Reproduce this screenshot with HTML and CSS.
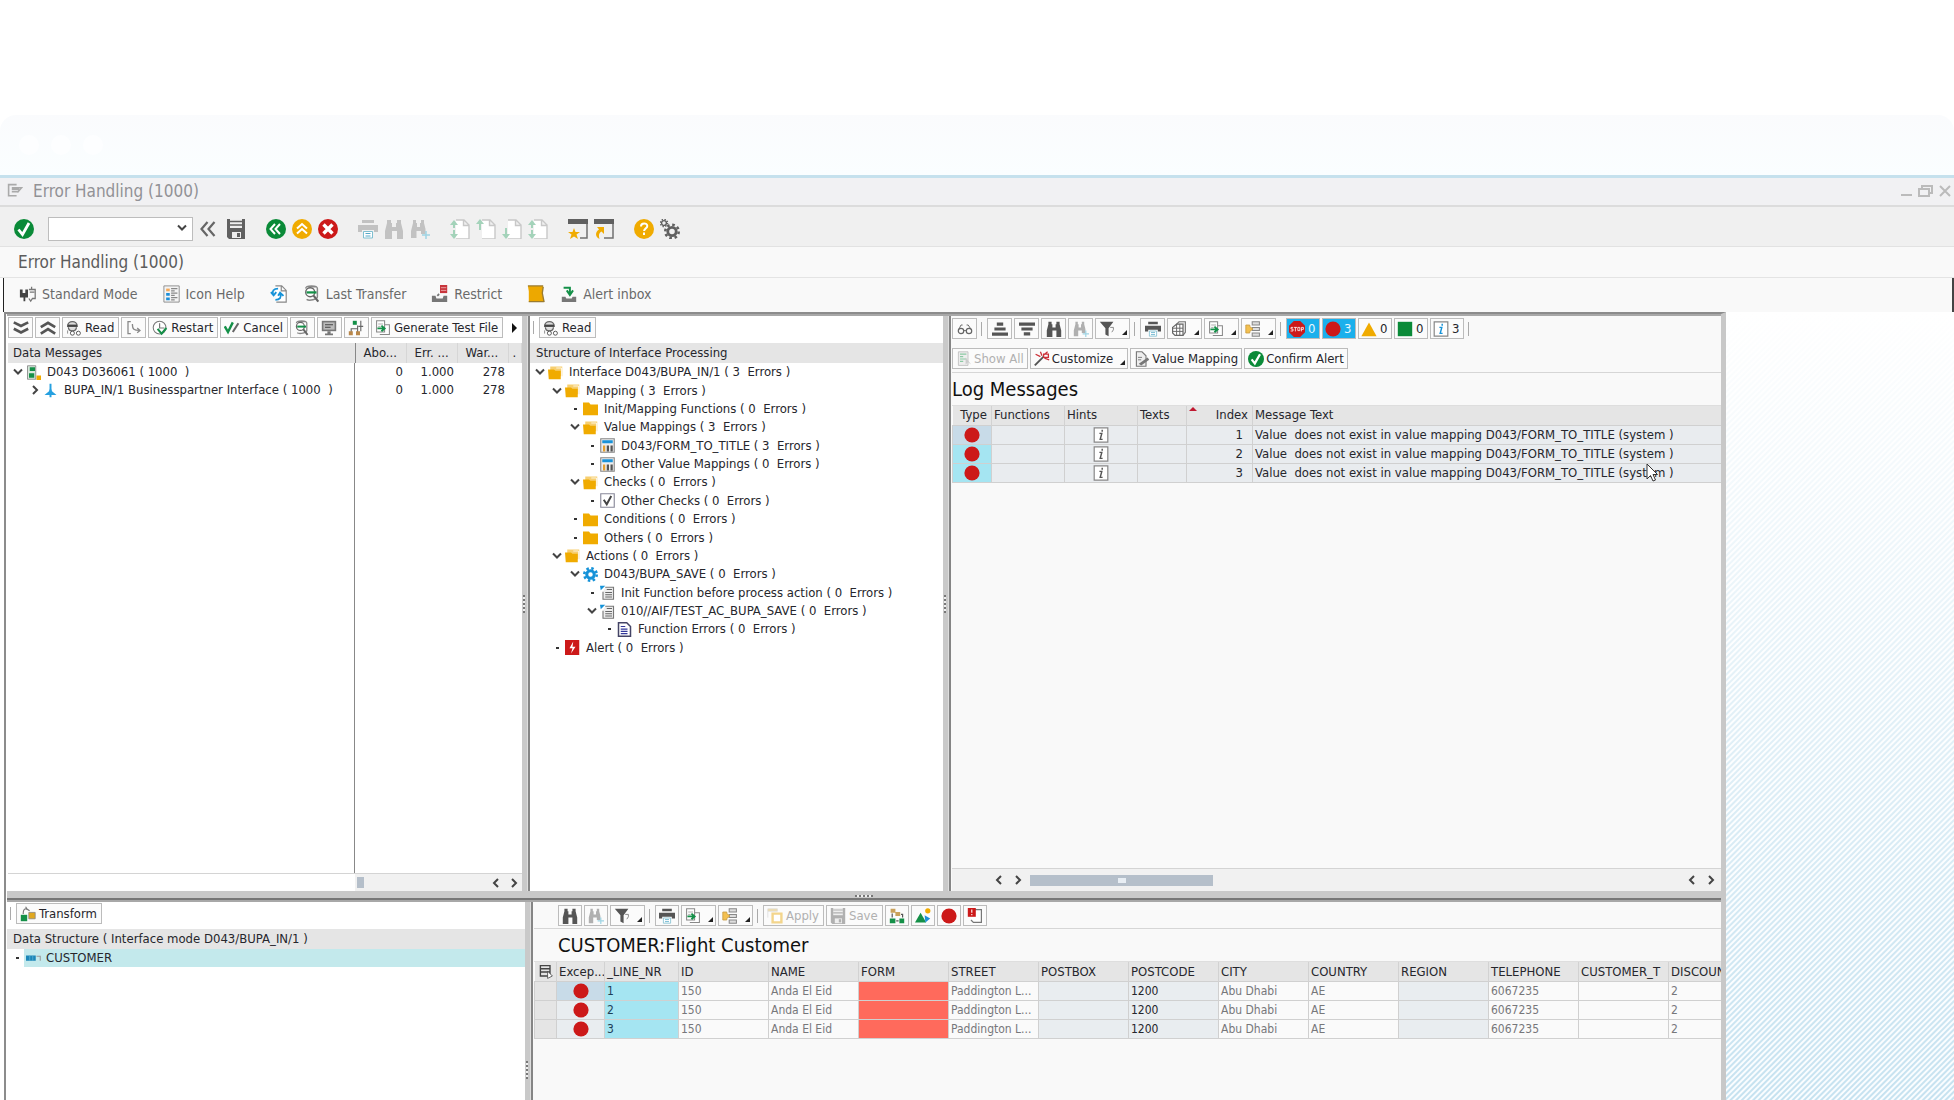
FILE: index.html
```html
<!DOCTYPE html>
<html lang="en">
<head>
<meta charset="utf-8">
<title>Error Handling (1000)</title>
<link rel="stylesheet" href="styles.css">
</head>
<body>
<svg class="sprite" aria-hidden="true">
  <defs>
    <symbol id="ok" viewBox="0 0 20 20"><circle cx="10" cy="10" r="10" fill="#0a8a38"/><path d="M4.500 10.500l4 5 6.500-11.500" fill="none" stroke="#fff" stroke-width="2.800"/></symbol>
    <symbol id="dbl" viewBox="0 0 16 20"><path d="M7.500 3l-6 7 6 7M14.500 3l-6 7 6 7" fill="none" stroke="#666" stroke-width="2.200"/></symbol>
    <symbol id="save" viewBox="0 0 20 20"><path d="M1 0h18v20H3l-2-2z" fill="currentColor"/><path d="M4 0h12v9H4z" fill="#eee"/><path d="M4 2.500h12M4 6h12" stroke="currentColor" stroke-width="1.500"/><path d="M6 13h9v6H6z" fill="#eee"/><path d="M11 14h3v4h-3z" fill="currentColor"/></symbol>
    <symbol id="back" viewBox="0 0 20 20"><circle cx="10" cy="10" r="10" fill="#0a8a38"/><path d="M9 5l-4.500 5L9 15M14 5l-4.500 5 4.500 5" fill="none" stroke="#fff" stroke-width="2"/></symbol>
    <symbol id="exit" viewBox="0 0 20 20"><circle cx="10" cy="10" r="10" fill="#f0ab00"/><path d="M5 9.500l5-4.500 5 4.500M5 14.500l5-4.500 5 4.500" fill="none" stroke="#fff" stroke-width="2"/></symbol>
    <symbol id="stopx" viewBox="0 0 20 20"><circle cx="10" cy="10" r="10" fill="#cc1919"/><path d="M5.500 5.500l9 9M14.500 5.500l-9 9" stroke="#fff" stroke-width="3.400"/></symbol>
    <symbol id="print" viewBox="0 0 20 20"><path d="M4 1h12v3H4zM0 6h20v7h-4v-2H4v2H0z" fill="currentColor"/><path d="M5.500 12.500h9v6.500h-9z" fill="#fff" stroke="#7fbfd0"/><path d="M7.500 14.500h5M7.500 17h5" stroke="#57a9c8"/></symbol>
    <symbol id="find" viewBox="0 0 20 20"><path d="M3 1h4v3h1v4h4V4h1V1h4v3l2 8v8h-6v-8H8v8H1v-8l2-8z" fill="currentColor"/></symbol>
    <symbol id="findn" viewBox="0 0 20 20"><path d="M3 1h3v3h1v4h3V4h1V1h3v3l1.500 6v5H11v-3H6.500v7H1v-7l2-8z" fill="currentColor"/><path d="M16 12v8M12 16h8" stroke="#9fd4e4" stroke-width="1.500"/></symbol>
    <symbol id="pg" viewBox="0 0 20 20"><path d="M6 1h8l5 5v14H6M13.500 1v5.500H19" fill="#fff" stroke="#c8c8c8" stroke-width="1.400"/></symbol>
    <symbol id="pgtt" viewBox="0 0 20 20"><use href="#pg"/><path d="M4 1l4 5H5v3H3V6H0zM4 20l4-5H5v-4H3v4H0z" fill="#a4d3ba"/></symbol>
    <symbol id="pgup" viewBox="0 0 20 20"><use href="#pg"/><path d="M4 0l4 5H5v6H3V5H0z" fill="#a4d3ba"/></symbol>
    <symbol id="pgdn" viewBox="0 0 20 20"><use href="#pg"/><path d="M4 20l4-5H5V9H3v6H0z" fill="#a4d3ba"/></symbol>
    <symbol id="sess" viewBox="0 0 20 20"><path d="M0 0h20v5H0z" fill="#606060"/><path d="M19 5v14h-7" fill="none" stroke="#707070" stroke-width="1.500"/><path d="M6 9l1.500 4H12l-3.500 2.500L10 20l-4-2.600L2 20l1.500-4.500L0 13h4.500z" fill="#f0ab00"/></symbol>
    <symbol id="scut" viewBox="0 0 20 20"><path d="M0 0h20v5H0z" fill="#606060"/><path d="M19 5v14h-9" fill="none" stroke="#707070" stroke-width="1.500"/><path d="M3 8h7v7l-2.500-2.500C5 14 4.500 16 5.500 20 1 18 1 13 5 10.500z" fill="#f0ab00"/></symbol>
    <symbol id="help" viewBox="0 0 20 20"><circle cx="10" cy="10" r="10" fill="#f0ab00"/><path d="M7 7.500c0-4 6.300-4 6.300-.5 0 2.500-3.200 2.200-3.200 5M10 13.500v2.500" fill="none" stroke="#fff" stroke-width="2"/></symbol>
    <symbol id="gears" viewBox="0 0 20 20"><circle cx="12" cy="12.500" r="4.200" fill="none" stroke="#606060" stroke-width="2.800"/><circle cx="12" cy="12.500" r="6.700" fill="none" stroke="#606060" stroke-width="2.600" stroke-dasharray="2.600 2.660"/><circle cx="4" cy="4" r="2.400" fill="none" stroke="#606060" stroke-width="1.400"/><circle cx="4" cy="4" r="3.600" fill="none" stroke="#606060" stroke-width="1.400" stroke-dasharray="1.400 1.427"/></symbol>
    <symbol id="mode" viewBox="0 0 20 20"><path d="M1 5h3v4h3V5h3v9H7v4H5v-4H1z" fill="#444"/><path d="M11 5h7v10h-3l-2 3-2-3M14 2v3M17 8h-5" fill="none" stroke="#777" stroke-width="1.400"/></symbol>
    <symbol id="ihelp" viewBox="0 0 20 20"><path d="M1 1h17v18H1z" fill="#f4f4f4" stroke="#888"/><path d="M3.500 4h4v3h-4z" fill="#f5a958"/><path d="M3.500 9h4v3h-4zM3.500 14h4v3h-4z" fill="#1d8fd8"/><path d="M9 4h7M9 6.500h4M9 9h7M9 11.500h4M9 14h7M9 16.500h4" stroke="#888" stroke-width="1.200"/></symbol>
    <symbol id="refr" viewBox="0 0 20 20"><path d="M6 1h7l5 5v13H7M12.500 1v5.500H18" fill="#fff" stroke="#888" stroke-width="1.300"/><path d="M9 4C4 4 2 7 3.500 10M1 8l3 3.500L7 8M6 16.500c5 0 7-3 5.500-6.500M9 12l2.200-3.500L15 12" fill="none" stroke="#1592d8" stroke-width="2"/></symbol>
    <symbol id="mag" viewBox="0 0 20 20"><path d="M3 4c0-4 13-4 13 0v9c0 3-9 5-12 3M5 2h10" fill="none" stroke="#888" stroke-width="1.600"/><circle cx="8" cy="8" r="5" fill="#fff" stroke="#666" stroke-width="1.500"/><path d="M11.500 11.500l5.500 7" stroke="#666" stroke-width="2.400"/><path d="M4 7h11v2.500H4z" fill="#149048"/></symbol>
    <symbol id="restr" viewBox="0 0 20 20"><path d="M1 12h4l1 3h7l1-3h4v7H1z" fill="#777"/><path d="M10 0h8v9h-8z" fill="#c8353c"/><path d="M11 3h6M11 6h6" stroke="#eaa" stroke-width="1"/><path d="M9 10l-2 2" stroke="#777" stroke-width="2"/></symbol>
    <symbol id="note" viewBox="0 0 20 20"><path d="M1 1h17l-1 8 2 10H2V7z" fill="#eda800"/><path d="M1 1h17M2 18.500h17M18 2l-1 7 2 10" stroke="#9a7b30" fill="none" stroke-width="1.500"/></symbol>
    <symbol id="inbox" viewBox="0 0 20 20"><path d="M2 13h4l1 2h6l1-2h4v6H2z" fill="#777"/><path d="M4 3h7v6M7.500 6l3.500 5 3.500-5" fill="none" stroke="#149048" stroke-width="2.200"/></symbol>
    <symbol id="cdn" viewBox="0 0 20 20"><path d="M1 3l9 4.500L19 3M1 11l9 4.500 9-4.500" fill="none" stroke="#555" stroke-width="3.400"/></symbol>
    <symbol id="cup" viewBox="0 0 20 20"><path d="M1 9l9-5.500L19 9M1 17l9-5.500 9 5.500" fill="none" stroke="#555" stroke-width="3.400"/></symbol>
    <symbol id="read" viewBox="0 0 20 20"><path d="M2 8c0-8 12-8 12 0zM3 9c0 6 10 6 10 0" fill="#ddd" stroke="#666" stroke-width="1.600"/><path d="M2 7h12" stroke="#444" stroke-width="2.500"/><circle cx="8" cy="16.500" r="2.500" fill="#fff" stroke="#555" stroke-width="1.200"/><circle cx="15.500" cy="16.500" r="2.500" fill="#fff" stroke="#555" stroke-width="1.200"/><path d="M2 13v4" stroke="#777"/></symbol>
    <symbol id="step" viewBox="0 0 20 20"><path d="M6 2H2.500v15H6M8 5c0 7 2 8 9 8M14 10l3.500 3-3.500 3" fill="none" stroke="#888" stroke-width="1.600"/></symbol>
    <symbol id="rest" viewBox="0 0 20 20"><circle cx="9.500" cy="9.500" r="8" fill="#fff" stroke="#777" stroke-width="1.300"/><path d="M9.500 4v6h6" fill="none" stroke="#777" stroke-width="1.500"/><path d="M7 11l5 6 6-7" fill="none" stroke="#149048" stroke-width="2.600"/></symbol>
    <symbol id="canc" viewBox="0 0 20 20"><path d="M1 8l4 7 6-12" fill="none" stroke="#149048" stroke-width="3"/><path d="M11 15l7-11" stroke="#666" stroke-width="2.600"/></symbol>
    <symbol id="mon" viewBox="0 0 20 20"><path d="M1 1h18v13H1z" fill="#777"/><path d="M3 3h14v9H3z" fill="#bbb"/><path d="M5 6h10M5 9h7" stroke="#444" stroke-width="1.400"/><path d="M8 14h4v3h3v2H5v-2h3z" fill="#777"/></symbol>
    <symbol id="hier" viewBox="0 0 20 20"><path d="M4 15v-4h8v4M12 11V7M16 1v13M13 8h6" fill="none" stroke="#666" stroke-width="1.400"/><path d="M6 1h5v5H6z" fill="#149048"/><path d="M1 14h5v5H1zM10 14h5v5h-5z" fill="#b8874a"/></symbol>
    <symbol id="gen" viewBox="0 0 20 20"><path d="M2 1h10v14H2zM12 6h6v12H6" fill="#fff" stroke="#888" stroke-width="1.300"/><path d="M4 5h6M4 8h3" stroke="#999"/><path d="M3 10.500h8M8 7l4 3.500L8 14" fill="none" stroke="#149048" stroke-width="2.400"/></symbol>
    <symbol id="mach" viewBox="0 0 20 20"><path d="M2 1h11v18H2z" fill="#d8e8dc" stroke="#777"/><path d="M5 3h7v5H5zM4 11h7v6H4z" fill="#149048"/><path d="M14 14h6v6h-6z" fill="#f0ab00"/></symbol>
    <symbol id="intf" viewBox="0 0 20 20"><path d="M10 1v18" stroke="#26a0e0" stroke-width="2.600"/><path d="M10 6l2 5 6 5H2l6-5z" fill="#26a0e0"/></symbol>
    <symbol id="fold" viewBox="0 0 20 20"><path d="M0 2h8l2 2.500h10V19H0z" fill="#f0ab00"/></symbol>
    <symbol id="foldo" viewBox="0 0 20 20"><path d="M3 2h16v13H3z" fill="#f7cf70"/><path d="M0 6h8l2 1.500h7V19H1z" fill="#f0ab00"/><path d="M11 4h7v12" fill="none" stroke="#fff"/></symbol>
    <symbol id="tab" viewBox="0 0 20 20"><path d="M1 1h18v18H1z" fill="#eee" stroke="#888" stroke-width="1.500"/><path d="M3 3h14v4H3z" fill="#1a92d8"/><path d="M4 10h3v8H4z" fill="#e5a030"/><path d="M9 10h3v8H9zM14 10h3v8h-3z" fill="#555"/></symbol>
    <symbol id="chk" viewBox="0 0 20 20"><path d="M1 1h18v18H1z" fill="#fff" stroke="#889" stroke-width="1.500"/><path d="M5 9l4 6 6-11" fill="none" stroke="#444" stroke-width="2.600"/></symbol>
    <symbol id="gear" viewBox="0 0 20 20"><circle cx="10" cy="10" r="5" fill="none" stroke="#1592d8" stroke-width="4"/><circle cx="10" cy="10" r="8.300" fill="none" stroke="#1592d8" stroke-width="3.400" stroke-dasharray="3.260 3.260"/></symbol>
    <symbol id="func" viewBox="0 0 20 20"><path d="M7 3h11v16H4V9" fill="#eee" stroke="#777" stroke-width="1.500"/><path d="M0 1h7L1 7z" fill="#1592d8"/><path d="M9 6h7M7 10h9M7 13h9M7 16h9" stroke="#666" stroke-width="1.600"/></symbol>
    <symbol id="doc" viewBox="0 0 20 20"><path d="M2 1h11l5 5v13H2z" fill="#fff" stroke="#446" stroke-width="2"/><path d="M5 6h6M5 9.500h9M5 12.500h9M5 15.500h9" stroke="#33389a" stroke-width="1.600"/></symbol>
    <symbol id="alert" viewBox="0 0 20 20"><path d="M0 0h19v20H0z" fill="#cc1919"/><path d="M11 2L6 11h4l-2 7 6-9h-4z" fill="#fff"/></symbol>
    <symbol id="glass" viewBox="0 0 20 20"><circle cx="5" cy="12.500" r="3.400" fill="none" stroke="#666" stroke-width="1.500"/><circle cx="15" cy="12.500" r="3.400" fill="none" stroke="#666" stroke-width="1.500"/><path d="M8.400 12h3.200M2 11l3-6h2M12 5h2l4 6" fill="none" stroke="#666" stroke-width="1.200"/></symbol>
    <symbol id="asc" viewBox="0 0 20 20"><path d="M6 2h8v4H6zM3 8h14v4H3zM0 14.500h20v4H0z" fill="#555"/></symbol>
    <symbol id="desc" viewBox="0 0 20 20"><path d="M0 2h20v4H0zM3 8h14v4H3zM6 14h8v4H6z" fill="#555"/></symbol>
    <symbol id="filt" viewBox="0 0 20 20"><path d="M1 1h17l-6 8v10l-4-2V9z" fill="#555"/><path d="M14 8h4v3l-2 3" fill="none" stroke="#888" stroke-width="1.200"/></symbol>
    <symbol id="view" viewBox="0 0 20 20"><path d="M7 4L10 1h8v13l-3 4" fill="#eee" stroke="#777" stroke-width="1.400"/><path d="M2 8l5-4h8v14H5l-3-3z" fill="#fff" stroke="#666" stroke-width="1.500"/><path d="M7 4v14M11 4v14M2 9h13M2 13h13" fill="none" stroke="#666" stroke-width="1.200"/></symbol>
    <symbol id="lay" viewBox="0 0 20 20"><path d="M9 1h9v4H9zM9 8h9v4H9zM9 15h9v4H9z" fill="#ddd" stroke="#888" stroke-width="1.300"/><path d="M1 5h5v2l4 3-4 3v2H1z" fill="#f3c050" stroke="#c89a40"/></symbol>
    <symbol id="stop" viewBox="0 0 20 20"><path d="M6 0h8l6 6v8l-6 6H6l-6-6V6z" fill="#cc1919"/><path d="M5 8H2.500v2H5v2.500H2M6 8h4M8 8v5M11 8h2.500v4H11zM15.500 13V8H18v2.500h-2.500" fill="none" stroke="#fff" stroke-width="1"/></symbol>
    <symbol id="red" viewBox="0 0 20 20"><circle cx="10" cy="10" r="9.500" fill="#cc1919"/></symbol>
    <symbol id="tri" viewBox="0 0 20 20"><path d="M10 2l9.500 17H.5z" fill="#f0ab00"/></symbol>
    <symbol id="grn" viewBox="0 0 20 20"><path d="M1 1h18v18H1z" fill="#0a8a38"/></symbol>
    <symbol id="inf" viewBox="0 0 20 20"><path d="M1.500 1h17v18h-17z" fill="#fff" stroke="#888" stroke-width="1.500"/><path d="M8 8h3l-2 7.500h3M11.500 3.500v2.500" fill="none" stroke="currentColor" stroke-width="1.800"/></symbol>
    <symbol id="list" viewBox="0 0 20 20"><path d="M3 1h12v17H3z" fill="#eee" stroke="#bbb"/><path d="M5 4h8M5 7h4M5 10h8M5 13h4" stroke="#8cc9a4" stroke-width="1.500"/><path d="M12 8v9l3-3 4 3z" fill="#ccc"/></symbol>
    <symbol id="wand" viewBox="0 0 20 20"><path d="M1 18L12 7" stroke="#555" stroke-width="2.400"/><path d="M2 4l6 3M8 1l2 5M12 5l5-4M13 9l6 2M12 4h6v4h-6z" stroke="#cc3038" fill="none" stroke-width="1.600"/></symbol>
    <symbol id="edit" viewBox="0 0 20 20"><path d="M3 1h7l5 5v13H3z" fill="#eee" stroke="#777" stroke-width="1.400"/><path d="M6 16L17 8l2 3-10 7z" fill="#777"/><path d="M5 8h5M5 11h4" stroke="#666"/></symbol>
    <symbol id="trans" viewBox="0 0 20 20"><path d="M1 11h8v8H1z" fill="#149048"/><path d="M11 8h8v8h-8z" fill="#e0a820" stroke="#888"/><path d="M4 10C4 3 7 2 12 6M7 1l2 3" fill="none" stroke="#777" stroke-width="1.400"/></symbol>
    <symbol id="field" viewBox="0 0 20 20"><path d="M0 6h13v7H0z" fill="#1b86b8"/><path d="M5 6v7M9 6v7" stroke="#60b4d8"/><path d="M14 7h5v6" fill="none" stroke="#999" stroke-width="1.400"/></symbol>
    <symbol id="apply" viewBox="0 0 20 20"><path d="M1 1h12v3H1zM1 4v8" fill="#f0dca8" stroke="#ddd"/><path d="M7 7h11v11H7z" fill="#fff" stroke="#f3d58c" stroke-width="3"/></symbol>
    <symbol id="map" viewBox="0 0 20 20"><path d="M1 13h7v6H1zM13 13h6v6h-6z" fill="#149048"/><path d="M2 1h6v5H2zM8 5h6v5H8z" fill="#c9a15a"/><path d="M4 7v5M9 16h3M15 8h2v4" stroke="#555" stroke-width="1.500" fill="none"/></symbol>
    <symbol id="mnt" viewBox="0 0 20 20"><path d="M0 18L7 6l7 12z" fill="#149048"/><path d="M12 9l7 4-6 5z" fill="#1d8fd8"/><circle cx="16" cy="3.500" r="3.300" fill="#f0ab00"/></symbol>
    <symbol id="book" viewBox="0 0 20 20"><path d="M8 2h10v16H8l-3-3" fill="#fff" stroke="#777" stroke-width="1.500"/><path d="M1 0h10v11H1z" fill="#cc1919"/><path d="M6 2v4M6 7.500v1.500" stroke="#fff" stroke-width="1.400"/></symbol>
    <symbol id="sel" viewBox="0 0 20 20"><path d="M3 2h12v13H3zM3 6h12M3 10h12" fill="none" stroke="#444" stroke-width="1.700"/><path d="M12 9v9l6-3z" fill="#fff" stroke="#444"/></symbol>
    <symbol id="ad" viewBox="0 0 10 10"><path d="M1 2.500l4 4 4-4" fill="none" stroke="#444" stroke-width="2"/></symbol>
    <symbol id="ar" viewBox="0 0 10 10"><path d="M3 1l4 4-4 4" fill="none" stroke="#444" stroke-width="2"/></symbol>
    <symbol id="al" viewBox="0 0 10 10"><path d="M7 1L3 5l4 4" fill="none" stroke="#444" stroke-width="2"/></symbol>
    <symbol id="dot" viewBox="0 0 10 10"><path d="M4 4h3v2H4z" fill="#333"/></symbol>
    <symbol id="menu" viewBox="0 0 20 20"><path d="M12 2H2v14h10M6 6h12l-5 6M6 8h9M6 11h7" fill="none" stroke="#aaa" stroke-width="2"/></symbol>
  </defs>
</svg>

<div class="chrome"><i></i><i></i><i></i></div>

<header class="titlebar">
  <svg class="menu"><use href="#menu"/></svg>
  <span>Error Handling (1000)</span>
  <svg class="winctl" viewBox="0 0 52 14"><path d="M1 11h11" stroke="#bbb" stroke-width="2"/><path d="M19 5h10v7H19zM22 5V2h10v7h-3" fill="none" stroke="#bbb" stroke-width="2"/><path d="M40 2l10 10M50 2L40 12" stroke="#bbb" stroke-width="2"/></svg>
</header>

<nav class="system" aria-label="System toolbar">
  <button aria-label="Enter"><svg><use href="#ok"/></svg></button>
  <label class="command"><input type="text" aria-label="Command"><svg class="a"><use href="#ad"/></svg></label>
  <button aria-label="Hide command field"><svg class="narrow"><use href="#dbl"/></svg></button>
  <button class="dark" aria-label="Save"><svg><use href="#save"/></svg></button>
  <div class="group"><button aria-label="Back"><svg><use href="#back"/></svg></button><button aria-label="Exit"><svg><use href="#exit"/></svg></button><button aria-label="Cancel"><svg><use href="#stopx"/></svg></button></div>
  <div class="group off"><button aria-label="Print"><svg><use href="#print"/></svg></button><button aria-label="Find"><svg><use href="#find"/></svg></button><button aria-label="Find next"><svg><use href="#findn"/></svg></button></div>
  <div class="group"><button aria-label="First page"><svg><use href="#pgtt"/></svg></button><button aria-label="Previous page"><svg><use href="#pgup"/></svg></button><button aria-label="Next page"><svg><use href="#pgdn"/></svg></button><button aria-label="Last page"><svg><use href="#pgtt"/></svg></button></div>
  <div class="group"><button aria-label="New session"><svg><use href="#sess"/></svg></button><button aria-label="Shortcut"><svg><use href="#scut"/></svg></button></div>
  <div class="group"><button aria-label="Help"><svg><use href="#help"/></svg></button><button aria-label="Customize layout"><svg><use href="#gears"/></svg></button></div>
</nav>

<h1 class="heading">Error Handling (1000)</h1>

<nav class="app" aria-label="Application toolbar">
  <button><svg><use href="#mode"/></svg>Standard Mode</button>
  <button><svg><use href="#ihelp"/></svg>Icon Help</button>
  <button aria-label="Refresh"><svg><use href="#refr"/></svg></button>
  <button class="near"><svg><use href="#mag"/></svg>Last Transfer</button>
  <button><svg><use href="#restr"/></svg>Restrict</button>
  <button aria-label="Note"><svg><use href="#note"/></svg></button>
  <button class="near"><svg><use href="#inbox"/></svg>Alert inbox</button>
</nav>

<main class="stage">
  <div class="work">
    <div class="row upper">
      <section class="panel messages">
        <div class="bar">
          <button class="sq" aria-label="Expand"><svg><use href="#cdn"/></svg></button>
          <button class="sq" aria-label="Collapse"><svg><use href="#cup"/></svg></button>
          <button><svg><use href="#read"/></svg>Read</button>
          <button class="sq" aria-label="Step"><svg><use href="#step"/></svg></button>
          <button><svg><use href="#rest"/></svg>Restart</button>
          <button><svg><use href="#canc"/></svg>Cancel</button>
          <button class="sq" aria-label="Search"><svg><use href="#mag"/></svg></button>
          <button class="sq" aria-label="Monitor"><svg><use href="#mon"/></svg></button>
          <button class="sq" aria-label="Hierarchy"><svg><use href="#hier"/></svg></button>
          <button><svg><use href="#gen"/></svg>Generate Test File</button>
          <span class="more"></span>
        </div>
        <div class="lined">
          <table class="counts">
            <colgroup><col class="c-name"><col class="c-num"><col class="c-num"><col class="c-num"><col></colgroup>
            <thead><tr><th>Data Messages</th><th>Abo...</th><th>Err. ...</th><th>War...</th><th>.</th></tr></thead>
            <tbody>
              <tr><td><div class="node l0"><svg class="a"><use href="#ad"/></svg><svg><use href="#mach"/></svg>D043 D036061 ( 1000  )</div></td><td>0</td><td>1.000</td><td>278</td><td></td></tr>
              <tr><td><div class="node l1"><svg class="a"><use href="#ar"/></svg><svg><use href="#intf"/></svg>BUPA_IN/1 Businesspartner Interface ( 1000  )</div></td><td>0</td><td>1.000</td><td>278</td><td></td></tr>
            </tbody>
          </table>
        </div>
        <div class="scroll half"><span class="blank"></span><span class="thumb tiny"></span><svg class="a end"><use href="#al"/></svg><svg class="a"><use href="#ar"/></svg></div>
      </section>

      <div class="split v"></div>

      <section class="panel structure">
        <div class="bar lead"><button><svg><use href="#read"/></svg>Read</button></div>
        <h2 class="strip">Structure of Interface Processing</h2>
        <div class="tree">
          <div class="node l0"><svg class="a"><use href="#ad"/></svg><svg><use href="#foldo"/></svg>Interface D043/BUPA_IN/1 ( 3  Errors )</div>
          <div class="node l1"><svg class="a"><use href="#ad"/></svg><svg><use href="#foldo"/></svg>Mapping ( 3  Errors )</div>
          <div class="node l2"><svg class="a"><use href="#dot"/></svg><svg><use href="#fold"/></svg>Init/Mapping Functions ( 0  Errors )</div>
          <div class="node l2"><svg class="a"><use href="#ad"/></svg><svg><use href="#foldo"/></svg>Value Mappings ( 3  Errors )</div>
          <div class="node l3"><svg class="a"><use href="#dot"/></svg><svg><use href="#tab"/></svg>D043/FORM_TO_TITLE ( 3  Errors )</div>
          <div class="node l3"><svg class="a"><use href="#dot"/></svg><svg><use href="#tab"/></svg>Other Value Mappings ( 0  Errors )</div>
          <div class="node l2"><svg class="a"><use href="#ad"/></svg><svg><use href="#foldo"/></svg>Checks ( 0  Errors )</div>
          <div class="node l3"><svg class="a"><use href="#dot"/></svg><svg><use href="#chk"/></svg>Other Checks ( 0  Errors )</div>
          <div class="node l2"><svg class="a"><use href="#dot"/></svg><svg><use href="#fold"/></svg>Conditions ( 0  Errors )</div>
          <div class="node l2"><svg class="a"><use href="#dot"/></svg><svg><use href="#fold"/></svg>Others ( 0  Errors )</div>
          <div class="node l1"><svg class="a"><use href="#ad"/></svg><svg><use href="#foldo"/></svg>Actions ( 0  Errors )</div>
          <div class="node l2"><svg class="a"><use href="#ad"/></svg><svg><use href="#gear"/></svg>D043/BUPA_SAVE ( 0  Errors )</div>
          <div class="node l3"><svg class="a"><use href="#dot"/></svg><svg><use href="#func"/></svg>Init Function before process action ( 0  Errors )</div>
          <div class="node l3"><svg class="a"><use href="#ad"/></svg><svg><use href="#func"/></svg>010//AIF/TEST_AC_BUPA_SAVE ( 0  Errors )</div>
          <div class="node l4"><svg class="a"><use href="#dot"/></svg><svg><use href="#doc"/></svg>Function Errors ( 0  Errors )</div>
          <div class="node l1"><svg class="a"><use href="#dot"/></svg><svg><use href="#alert"/></svg>Alert ( 0  Errors )</div>
        </div>
      </section>

      <div class="split v"></div>

      <section class="panel log">
        <div class="bar grid-bar">
          <button class="sq" aria-label="Details"><svg><use href="#glass"/></svg></button><hr>
          <button class="sq" aria-label="Sort ascending"><svg><use href="#asc"/></svg></button>
          <button class="sq" aria-label="Sort descending"><svg><use href="#desc"/></svg></button>
          <button class="sq" aria-label="Find"><svg><use href="#find"/></svg></button>
          <button class="sq off" aria-label="Find next"><svg><use href="#findn"/></svg></button>
          <button class="dd" aria-label="Filter"><svg><use href="#filt"/></svg></button><hr>
          <button class="sq" aria-label="Print"><svg><use href="#print"/></svg></button>
          <button class="dd" aria-label="Views"><svg><use href="#view"/></svg></button>
          <button class="dd" aria-label="Export"><svg><use href="#gen"/></svg></button>
          <button class="dd" aria-label="Layout"><svg><use href="#lay"/></svg></button><hr>
          <button class="num on"><svg><use href="#stop"/></svg>0</button>
          <button class="num on"><svg><use href="#red"/></svg>3</button>
          <button class="num"><svg><use href="#tri"/></svg>0</button>
          <button class="num"><svg><use href="#grn"/></svg>0</button>
          <button class="num"><svg class="blue"><use href="#inf"/></svg>3</button><hr>
        </div>
        <div class="bar second">
          <button class="off" disabled><svg><use href="#list"/></svg>Show All</button>
          <button class="dd"><svg><use href="#wand"/></svg>Customize</button>
          <button><svg><use href="#edit"/></svg>Value Mapping</button>
          <button><svg><use href="#ok"/></svg>Confirm Alert</button>
        </div>
        <h2 class="title">Log Messages</h2>
        <table class="data logs">
          <colgroup><col class="w-type"><col class="w-fn"><col class="w-fn"><col class="w-tx"><col class="w-ix"><col></colgroup>
          <thead><tr><th class="r">Type</th><th>Functions</th><th>Hints</th><th>Texts</th><th class="r sorted">Index</th><th>Message Text</th></tr></thead>
          <tbody>
            <tr><td class="cur pic"><svg><use href="#red"/></svg></td><td></td><td class="pic"><svg><use href="#inf"/></svg></td><td></td><td class="r">1</td><td>Value  does not exist in value mapping D043/FORM_TO_TITLE (system )</td></tr>
            <tr><td class="key pic"><svg><use href="#red"/></svg></td><td></td><td class="pic"><svg><use href="#inf"/></svg></td><td></td><td class="r">2</td><td>Value  does not exist in value mapping D043/FORM_TO_TITLE (system )</td></tr>
            <tr><td class="key pic"><svg><use href="#red"/></svg></td><td></td><td class="pic"><svg><use href="#inf"/></svg></td><td></td><td class="r">3</td><td>Value  does not exist in value mapping D043/FORM_TO_TITLE (system )</td></tr>
          </tbody>
        </table>
        <div class="scroll full"><svg class="a"><use href="#al"/></svg><svg class="a"><use href="#ar"/></svg><span class="thumb wide"></span><svg class="a end"><use href="#al"/></svg><svg class="a"><use href="#ar"/></svg></div>
      </section>
    </div>

    <div class="split h"></div>

    <div class="row lower">
      <section class="panel fields">
        <div class="bar lead"><button><svg><use href="#trans"/></svg>Transform</button></div>
        <h2 class="strip">Data Structure ( Interface mode D043/BUPA_IN/1 )</h2>
        <div class="node l0 picked"><svg class="a"><use href="#dot"/></svg><span><svg><use href="#field"/></svg>CUSTOMER</span></div>
      </section>

      <div class="split v"></div>

      <section class="panel records">
        <div class="bar inset">
          <button class="sq" aria-label="Find"><svg><use href="#find"/></svg></button>
          <button class="sq off" aria-label="Find next"><svg><use href="#findn"/></svg></button>
          <button class="dd" aria-label="Filter"><svg><use href="#filt"/></svg></button><hr>
          <button class="sq" aria-label="Print"><svg><use href="#print"/></svg></button>
          <button class="dd" aria-label="Export"><svg><use href="#gen"/></svg></button>
          <button class="dd" aria-label="Layout"><svg><use href="#lay"/></svg></button><hr>
          <button class="off" disabled><svg><use href="#apply"/></svg>Apply</button>
          <button class="off" disabled><svg><use href="#save"/></svg>Save</button>
          <button class="sq" aria-label="Mapping"><svg><use href="#map"/></svg></button>
          <button class="sq" aria-label="Overview"><svg><use href="#mnt"/></svg></button>
          <button class="sq" aria-label="Errors"><svg><use href="#red"/></svg></button>
          <button class="sq" aria-label="Log"><svg><use href="#book"/></svg></button>
        </div>
        <h2 class="title inset">CUSTOMER:Flight Customer</h2>
        <table class="data recs">
          <colgroup><col class="w-sel"><col class="w-ex"><col class="w-ln"><col class="w-c" span="11"><col></colgroup>
          <thead><tr><th><svg><use href="#sel"/></svg></th><th>Excep...</th><th>_LINE_NR</th><th>ID</th><th>NAME</th><th>FORM</th><th>STREET</th><th>POSTBOX</th><th>POSTCODE</th><th>CITY</th><th>COUNTRY</th><th>REGION</th><th>TELEPHONE</th><th>CUSTOMER_T</th><th>DISCOUN</th></tr></thead>
          <tbody>
            <tr><td class="grip"></td><td class="cur pic"><svg><use href="#red"/></svg></td><td class="key">1</td><td>150</td><td>Anda El Eid</td><td class="bad"></td><td>Paddington L...</td><td class="ed"></td><td class="ed">1200</td><td>Abu Dhabi</td><td>AE</td><td class="ed"></td><td>6067235</td><td></td><td>2</td></tr>
            <tr><td class="grip"></td><td class="ed pic"><svg><use href="#red"/></svg></td><td class="key">2</td><td>150</td><td>Anda El Eid</td><td class="bad"></td><td>Paddington L...</td><td class="ed"></td><td class="ed">1200</td><td>Abu Dhabi</td><td>AE</td><td class="ed"></td><td>6067235</td><td></td><td>2</td></tr>
            <tr><td class="grip"></td><td class="ed pic"><svg><use href="#red"/></svg></td><td class="key">3</td><td>150</td><td>Anda El Eid</td><td class="bad"></td><td>Paddington L...</td><td class="ed"></td><td class="ed">1200</td><td>Abu Dhabi</td><td>AE</td><td class="ed"></td><td>6067235</td><td></td><td>2</td></tr>
          </tbody>
        </table>
      </section>
    </div>
  </div>
  <aside class="hatch"></aside>
</main>

<svg class="pointer" viewBox="0 0 12 19"><path d="M1 1v15l3.500-3.500L7 18l2.500-1-2.500-5.500h4.500z" fill="#fff" stroke="#333"/></svg>
</body>
</html>
```
FILE: styles.css
```css
* { box-sizing: border-box; }

body {
  margin: 0;
  height: 100vh;
  overflow: hidden;
  padding-top: 115px;
  display: flex;
  flex-direction: column;
  background: #fff;
  color: #26262c;
  font: 13px/18px "DejaVu Sans Condensed", "DejaVu Sans", sans-serif;
}

.sprite { position: absolute; width: 0; height: 0; }
svg { display: block; flex: none; width: 20px; height: 20px; }
svg.a { width: 10px; height: 10px; }
h1, h2 { margin: 0; font-weight: 400; }
button { margin: 0; padding: 0; border: 0; background: none; color: inherit; font: inherit; white-space: nowrap; }

/* Window frame */
.chrome {
  flex: none;
  height: 63px;
  padding: 20px 19px;
  display: flex;
  gap: 12px;
  background: linear-gradient(#fafbfd, #fafeff);
  border-bottom: 3px solid #c5e1ed;
  border-radius: 16px 16px 0 0;
}
.chrome i { width: 20px; height: 20px; border-radius: 50%; background: #fdfeff; }

.titlebar {
  flex: none;
  height: 29px;
  padding: 0 2px 2px 7px;
  display: flex;
  align-items: center;
  gap: 10px;
  background: #f1f1f3;
  border-bottom: 2px solid #dcdcdc;
  color: #929296;
  font-size: 17px;
}
.menu { width: 16px; height: 16px; }
.winctl { width: 52px; height: 14px; margin-left: auto; }

.system {
  flex: none;
  height: 40px;
  padding: 5px 14px 0;
  display: flex;
  align-items: center;
  background: #f0f0f0;
  border-bottom: 1px solid #e2e2e2;
}
.command { position: relative; margin: 0 7px 0 14px; }
.command input { display: block; width: 145px; height: 24px; border: 1px solid #bdbdbd; background: #fff; }
.command svg { position: absolute; right: 6px; top: 6px; }
.narrow { width: 16px; }
.dark { margin-left: 10px; color: #606060; }
.group { display: flex; gap: 6px; margin-left: 20px; }
.group.off { color: #c2c2c2; }

.heading {
  flex: none;
  height: 31px;
  padding: 0 18px;
  background: #f9f9f9;
  border-bottom: 1px solid #e4e4e4;
  color: #5c5c5c;
  font-size: 17px;
  line-height: 30px;
}

.app {
  flex: none;
  height: 34px;
  margin: 0 0 0 3px;
  padding: 0 15px 2px;
  display: flex;
  align-items: center;
  gap: 25px;
  background: #f9f9f9;
  border-left: 1px solid #222;
  border-right: 2px solid #444;
  color: #6a6a6a;
  font-size: 14px;
}
.app button { display: flex; align-items: center; gap: 5px; }
.app .near { margin-left: -10px; }
.app svg { width: 18px; height: 18px; }

/* Work area */
.stage { flex: 1; min-height: 0; display: flex; background: #fff; }
.work {
  flex: 1;
  min-width: 0;
  margin-left: 4px;
  display: flex;
  flex-direction: column;
  border-top: 2px solid #8c8c8c;
  border-left: 2px solid #8c8c8c;
  border-right: 5px solid #c8c8c8;
  padding-left: 1px;
}
.row { display: flex; min-height: 0; min-width: 0; border-top: 2px solid #a8a8a8; }
.upper { flex: 576; }
.lower { flex: 198; }
.panel { display: flex; flex-direction: column; min-width: 0; overflow: hidden; background: #fff; }
.messages { flex: 0 0 515px; padding-left: 1px; }
.structure { flex: 0 0 413px; }
.fields { flex: 0 0 518px; }
.log, .records { flex: 1; background: #f9f9f9; padding-left: 1px; }

.split { flex: none; position: relative; background: #c9c9c9; }
.split.v { width: 8px; border-right: 2px solid #858585; box-shadow: inset -1px 0 #dedede; }
.split.h { height: 9px; border-bottom: 2px solid #777; }
.split::after { content: ""; position: absolute; }
.split.v::after { left: 1px; top: 50%; width: 2px; height: 18px; margin-top: -9px; background: repeating-linear-gradient(#777 0 2px, #eee 2px 4px); }
.lower .split.v::after { top: 85%; }
.split.h::after { left: 50%; top: 4px; width: 18px; height: 2px; margin-left: -9px; background: repeating-linear-gradient(90deg, #777 0 2px, #eee 2px 4px); }

.bar { flex: none; display: flex; align-items: center; gap: 2px; height: 27px; padding-bottom: 4px; }
.bar button {
  height: 21px;
  padding: 0 4px 0 3px;
  display: flex;
  align-items: center;
  gap: 3px;
  border: 1px solid #bcbcbc;
  background: #fbfbfb;
}
.bar button svg { width: 16px; height: 16px; color: #555; }
.bar .sq { width: 25px; padding: 0; justify-content: center; }
.bar .off, .bar .off svg { color: #b0b0b0; }
.bar .dd { position: relative; padding-right: 14px; }
.bar .dd::after { content: ""; position: absolute; right: 2px; bottom: 3px; border: solid transparent; border-width: 0 0 5px 5px; border-bottom-color: #222; }
.bar .num { width: 34px; padding: 0 3px 0 2px; }
.bar .on { background: #1bb0ec; color: #e8f8ff; }
.bar .num .blue { color: #1592d8; }
.bar hr { width: 1px; height: 14px; margin: 0 3px 0 2px; border: 0; background: #aaa; }
.more { margin-left: 7px; border: 5px solid transparent; border-left: 5px solid #111; border-right: 0; }
.lead { padding-left: 9px; background: linear-gradient(#aaa, #aaa) 3px 5px / 1px 13px no-repeat; }

.strip { flex: none; padding: 1px 6px; background: #e5e5e5; font-size: 13px; line-height: 18px; white-space: pre; }

.node { display: flex; align-items: center; gap: 3px; line-height: 18px; white-space: pre; }
.node svg { width: 15px; height: 15px; margin-right: 3px; }
.node svg.a { width: 10px; height: 10px; margin: 0; }
.l0 { padding-left: 5px; }
.l1 { padding-left: 22px; }
.l2 { padding-left: 40px; }
.l3 { padding-left: 57px; }
.l4 { padding-left: 74px; }
.tree { flex: none; height: 294px; display: grid; grid-template-rows: repeat(16, 1fr); }
.picked { gap: 2px; }
.picked span { flex: 1; display: flex; align-items: center; padding-left: 2px; gap: 2px; background: #c3e9ec; }

table { flex: none; width: 100%; table-layout: fixed; border-collapse: collapse; }
th, td { padding: 0; overflow: hidden; font-weight: 400; text-align: left; white-space: pre; }

.lined { flex: 1; background: linear-gradient(#888, #888) 346px 0 / 1px 100% no-repeat; }
.counts th { height: 20px; padding-left: 5px; background: #e5e5e5; border-right: 1px solid #d6d6d6; }
.counts th:first-child { border-color: #888; }
.counts th + th { padding-left: 8px; }
.counts th:last-child { padding-left: 4px; }
.counts td { height: 18px; }
.counts td + td { padding-right: 3px; text-align: right; }
.c-name { width: 347px; }
.c-num { width: 51px; }

.title { flex: none; height: 34px; line-height: 32px; font-size: 20px; color: #111; border-top: 1px solid #d6d6d6; border-bottom: 1px solid #dedede; }
.grid-bar { height: 32px; padding: 1px 0 8px; }
.second { height: 24px; padding-bottom: 3px; }
.second button { gap: 2px; padding-right: 3px; }
.bar.inset { height: 26px; padding: 3px 0 2px 24px; }
.inset .sq { width: 24px; }
.title.inset { padding-left: 24px; }

.data { background: #fafafa; }
.data th { height: 19px; background: #e5e5e5; border-right: 1px solid #d2d2d2; padding-left: 2px; }
.data td { height: 19px; border: 1px solid #d0d0d0; padding-left: 2px; line-height: 16px; }
.data th:last-child, .data td:last-child { border-right: 0; }
.data svg { width: 16px; height: 16px; margin: 0 auto; }
.data .pic { padding: 0; color: #555; }
.data .r { text-align: right; padding-right: 4px; }
.logs td { background: #e9ecef; }
.logs td.r { padding-right: 9px; }
.data td.cur { background: #c8dbe8; }
.data td.key { background: #a5e5f2; color: #1f3e55; }
.data td.bad { background: #ff6a5c; }
.data td.ed { background: #e9edf0; color: #26262c; }
.data td.grip { background: #e5e5e5; }
.recs td { color: #77777a; font-size: 12px; }
.sorted { position: relative; }
.sorted::before { content: ""; position: absolute; left: 2px; top: 1px; border: 4px solid transparent; border-top: 0; border-bottom-color: #c01830; }
.w-type { width: 39px; }
.w-fn { width: 73px; }
.w-tx { width: 49px; }
.w-ix { width: 66px; }
.w-sel { width: 22px; }
.w-ex { width: 48px; }
.w-ln { width: 74px; }
.w-c { width: 90px; }

.scroll { flex: none; display: flex; align-items: center; gap: 9px; background: #f1f1f1; border-top: 1px solid #d4d4d4; }
.scroll .end { margin-left: auto; }
.half { height: 18px; padding-right: 3px; gap: 8px; }
.blank { width: 347px; align-self: stretch; margin-right: -6px; background: #fff; }
.tiny { width: 7px; height: 11px; background: #b5bfca; }
.full { height: 23px; margin-top: auto; padding: 0 5px 0 42px; }
.wide { width: 183px; height: 11px; margin-left: -2px; background: #b5bfca linear-gradient(#e8eef4, #e8eef4) center / 8px 5px no-repeat; }

.hatch {
  flex: 0 0 228px;
  background:
    linear-gradient(#fff, rgba(255, 255, 255, 0)),
    repeating-linear-gradient(135deg, #c6e2f0 0 1px, #fafdff 2px 3px, #c6e2f0 4px);
}

.pointer { position: absolute; left: 1646px; top: 463px; width: 12px; height: 19px; }
```
